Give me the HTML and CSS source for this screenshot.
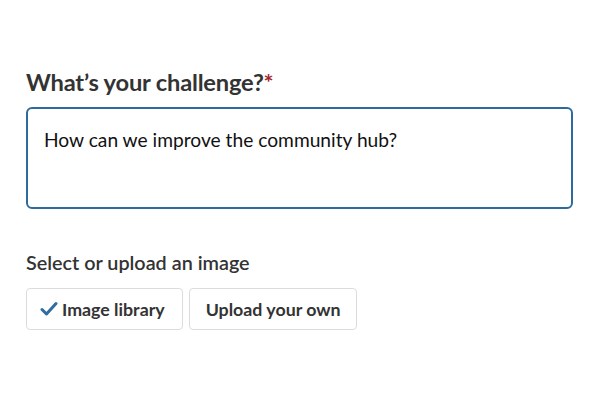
FILE: index.html
```html
<!DOCTYPE html>
<html>
<head>
<meta charset="utf-8">
<link rel="stylesheet" href="styles.css">
</head>
<body>
<main class="form">
  <label class="title">What’s your challenge?<span class="req">*</span></label>
  <div class="textarea">How can we improve the community hub?</div>
  <div class="sub">Select or upload an image</div>
  <div class="buttons">
    <button class="btn"><svg class="check" width="18" height="16" viewBox="0 0 18 16"><path d="M2 8.5 L6.5 13 L16 2.5" fill="none" stroke="#2f6c9f" stroke-width="3" stroke-linecap="round" stroke-linejoin="round"/></svg>Image library</button>
    <button class="btn">Upload your own</button>
  </div>
</main>
</body>
</html>
```
FILE: styles.css
```css
html, body { margin: 0; padding: 0; background: #fff; }
body { font-family: Lato, "Noto Sans", sans-serif; color: #2b2b2b; }
.form { padding: 68px 27px 0 26px; display: flex; flex-direction: column; }
.title { font-size: 23.7px; font-weight: 700; line-height: 28px; color: #333; letter-spacing: -0.2px; }
.req { color: #a4262c; }
.textarea { margin-top: 11px; height: 102px; border: 2px solid #2e6a9a; border-radius: 6px; padding: 19px 16px; box-sizing: border-box; font-size: 19.2px; line-height: 24px; color: #111; }
.sub { margin-top: 41px; font-size: 19.8px; font-weight: 600; line-height: 24px; color: #333; }
.buttons { display: flex; gap: 6px; margin-top: 14px; }
.btn { font-family: inherit; font-size: 17.8px; font-weight: 700; color: #333; background: #fff; border: 1px solid #dcdcdc; border-radius: 4px; height: 42px; padding: 0 17px 0 13px; display: flex; align-items: center; gap: 4px; }
.btn + .btn { padding: 0 15px 0 16px; }
```
